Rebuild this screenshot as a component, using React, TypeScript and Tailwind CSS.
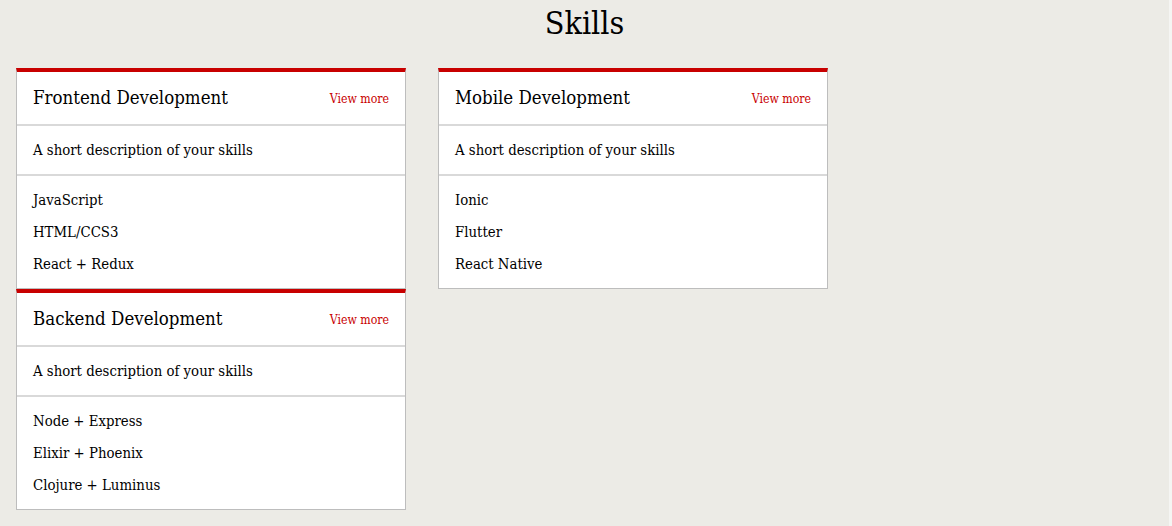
import React from 'react';

const SKILLS = [
  [
    { title: 'Frontend Development', items: ['JavaScript', 'HTML/CCS3', 'React + Redux'] },
    { title: 'Backend Development', items: ['Node + Express', 'Elixir + Phoenix', 'Clojure + Luminus'] },
  ],
  [{ title: 'Mobile Development', items: ['Ionic', 'Flutter', 'React Native'] }],
];

const font = "font-['DejaVu_Serif_Condensed','DejaVu_Serif',serif]";

const SkillCard = ({ title, items }: { title: string; items: string[] }) => (
  <div className="bg-white border border-[#bdbdbd] border-t-4 border-t-[#c80000]">
    <div className="h-[54px] flex items-center justify-between px-4 border-b-2 border-[#d9d9d9]">
      <h3 className="text-[18.5px] text-black">{title}</h3>
      <a href="#" className="text-[12.2px] text-[#c80000] pt-[2px]">View more</a>
    </div>
    <div className="h-[50px] flex items-center px-4 border-b-2 border-[#d9d9d9] text-[14.8px] text-black">
      A short description of your skills
    </div>
    <ul className="py-2 px-4">
      {items.map((item) => (
        <li key={item} className="h-8 flex items-center text-[14.8px] text-black">{item}</li>
      ))}
    </ul>
  </div>
);

export default function App() {
  return (
    <div className={`min-h-screen bg-[#ecebe6] border-r-[3px] border-[#f5f5f3] ${font}`}>
      <div className="h-[68px] pt-[4px]">
        <h1 className="text-center text-[32px] leading-[38px] text-black">Skills</h1>
      </div>
      <div className="flex items-start gap-8 px-4">
        {SKILLS.map((col, i) => (
          <div key={i} className="w-[390px] flex flex-col">
            {col.map((card) => (
              <SkillCard key={card.title} {...card} />
            ))}
          </div>
        ))}
      </div>
    </div>
  );
}
